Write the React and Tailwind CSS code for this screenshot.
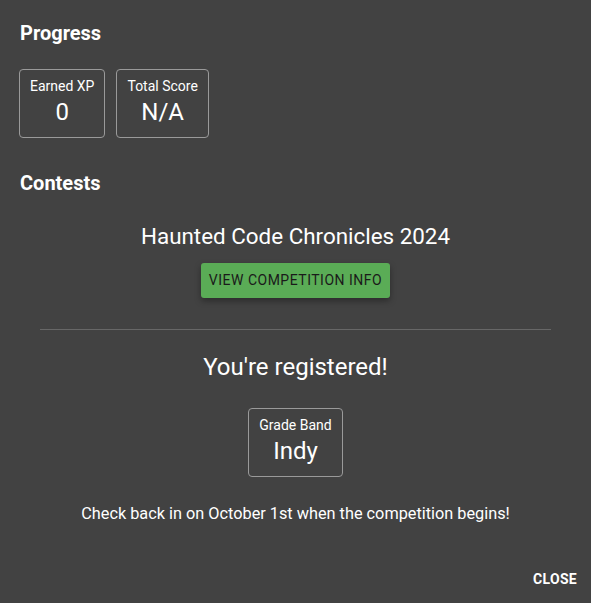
const STATS = [
  { label: "Earned XP", value: "0" },
  { label: "Total Score", value: "N/A" },
];

function StatBox({ label, value }) {
  return (
    <div className="flex flex-col items-center border border-[#9a9a9a] rounded px-[10px] pt-1.5 pb-[11px]">
      <span className="text-[14px] leading-5">{label}</span>
      <span className="text-[24px] leading-7 mt-[2px]">{value}</span>
    </div>
  );
}

export default function App() {
  return (
    <div
      className="min-h-[603px] bg-[#424242] text-white flex flex-col"
      style={{ fontFamily: "Roboto, 'Liberation Sans', sans-serif" }}
    >
      <div className="px-5 pt-[17px]">
        {/* Progress */}
        <h2 className="text-[20px] font-bold leading-8">Progress</h2>
        <div className="flex gap-[11px] mt-[20px] -ml-px">
          {STATS.map((s) => (
            <StatBox key={s.label} {...s} />
          ))}
        </div>

        {/* Contests */}
        <h2 className="text-[20px] font-bold leading-8 mt-[29px]">Contests</h2>
        <div className="flex flex-col items-center">
          <p className="text-[22.4px] leading-7 mt-[23px]">Haunted Code Chronicles 2024</p>
          <button className="mt-[13px] h-[35px] px-2 bg-[#5aac56] text-[#1a1a1a] text-[14px] font-normal tracking-[0.5px] uppercase rounded-[3px] shadow-[0_3px_6px_rgba(0,0,0,0.35)]">
            View Competition Info
          </button>
        </div>
        <hr className="mx-5 mt-[31px] border-0 border-t border-white/20" />
        <div className="flex flex-col items-center">
          <p className="text-[24px] leading-8 mt-[21px]">You're registered!</p>
          <div className="mt-[25px]">
            <StatBox label="Grade Band" value="Indy" />
          </div>
          <p className="text-[16.3px] leading-6 mt-[25px]">
            Check back in on October 1st when the competition begins!
          </p>
        </div>
      </div>
      <div className="flex justify-end pr-[14px] mt-[43px]">
        <button className="text-[14px] font-bold leading-5 uppercase tracking-[0.3px]">Close</button>
      </div>
    </div>
  );
}
